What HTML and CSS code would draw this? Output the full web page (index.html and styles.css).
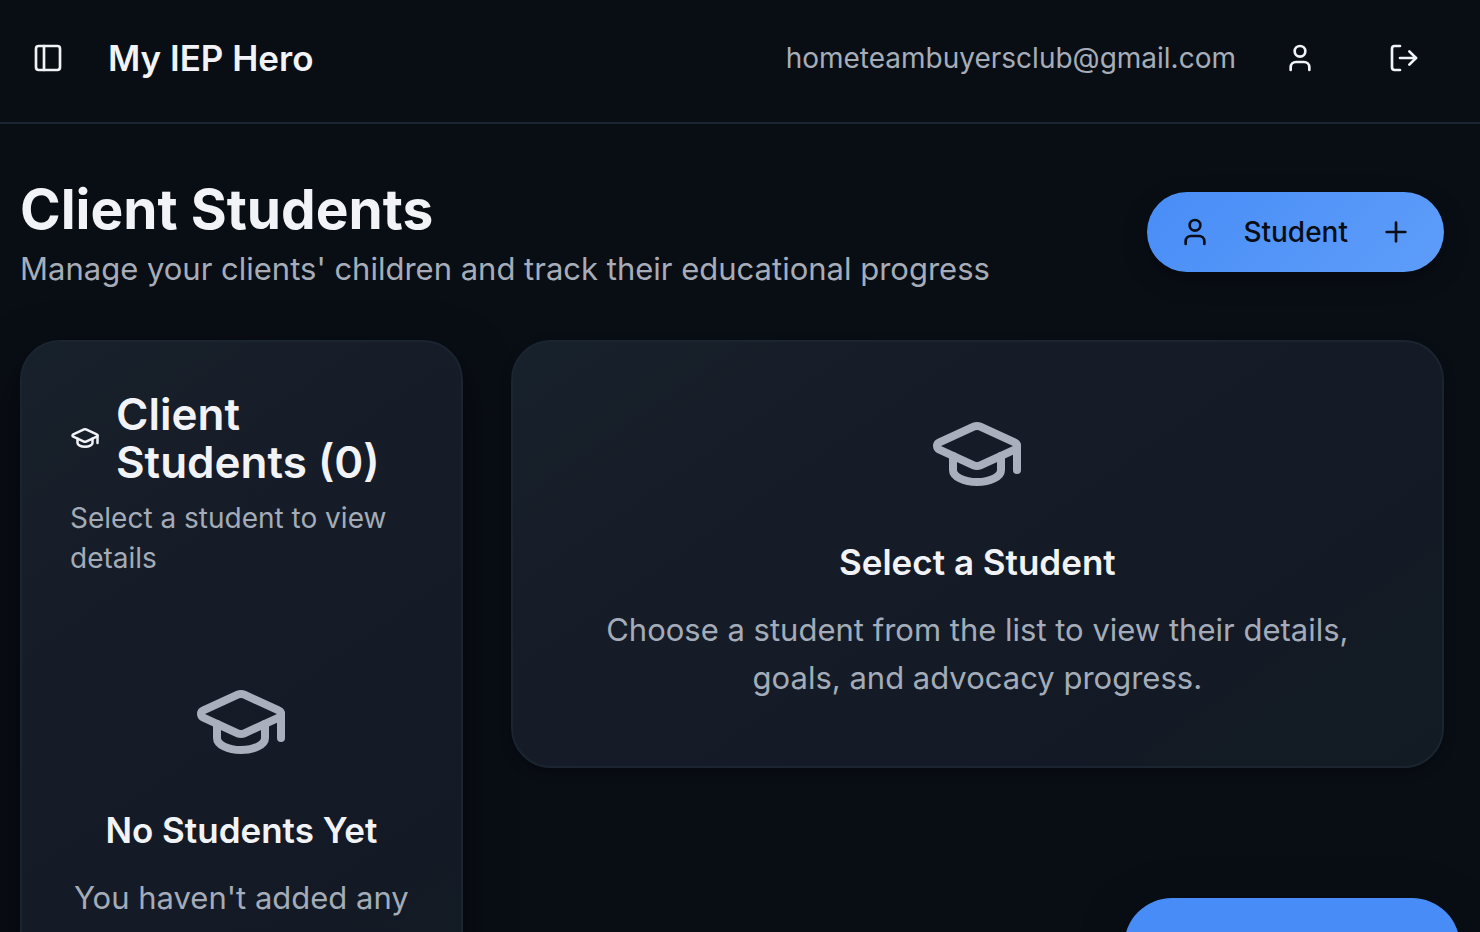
FILE: index.html
```html
<!DOCTYPE html>
<html lang="en">
<head>
<meta charset="utf-8">
<title>My IEP Hero</title>
<link rel="stylesheet" href="styles.css">
</head>
<body>
<svg class="sprite" aria-hidden="true">
  <symbol id="cap" viewBox="0 0 24 24"><path d="M21.42 10.922a1 1 0 0 0-.019-1.838L12.83 5.18a2 2 0 0 0-1.66 0L2.6 9.08a1 1 0 0 0 0 1.832l8.57 3.908a2 2 0 0 0 1.66 0z"/><path d="M22 10v6"/><path d="M6 12.5V16a6 3 0 0 0 12 0v-3.5"/></symbol>
  <symbol id="user" viewBox="0 0 24 24"><path d="M19 21v-2a4 4 0 0 0-4-4H9a4 4 0 0 0-4 4v2"/><circle cx="12" cy="7" r="4"/></symbol>
</svg>
<header class="topbar">
  <button class="icon-button sidebar-toggle" type="button" aria-label="Toggle sidebar">
    <svg class="icon" viewBox="0 0 24 24"><rect x="3" y="3" width="18" height="18" rx="2"/><path d="M9 3v18"/></svg>
  </button>
  <span class="brand">My IEP Hero</span>
  <div class="account">
    <span class="email">hometeambuyersclub@gmail.com</span>
    <button class="icon-button" type="button" aria-label="Profile"><svg class="icon"><use href="#user"/></svg></button>
    <button class="icon-button" type="button" aria-label="Sign out">
      <svg class="icon" viewBox="0 0 24 24"><path d="M9 21H5a2 2 0 0 1-2-2V5a2 2 0 0 1 2-2h4"/><path d="m16 17 5-5-5-5"/><path d="M21 12H9"/></svg>
    </button>
  </div>
</header>
<main class="content">
  <div class="page-head">
    <div>
      <h1 class="page-title">Client Students</h1>
      <p class="page-subtitle">Manage your clients' children and track their educational progress</p>
    </div>
    <button class="add-button" type="button">
      <svg class="icon"><use href="#user"/></svg>
      <span>Student</span>
      <svg class="icon" viewBox="0 0 24 24"><path d="M5 12h14"/><path d="M12 5v14"/></svg>
    </button>
  </div>
  <div class="columns">
    <section class="card card-raised">
      <div class="card-head">
        <h2 class="card-title"><svg class="icon"><use href="#cap"/></svg><span>Client Students (0)</span></h2>
        <p class="card-note">Select a student to view details</p>
      </div>
      <div class="empty empty-list">
        <svg class="icon icon-large"><use href="#cap"/></svg>
        <h3 class="empty-title">No Students Yet</h3>
        <p class="empty-text">You haven't added any</p>
      </div>
    </section>
    <section class="card">
      <div class="empty">
        <svg class="icon icon-large"><use href="#cap"/></svg>
        <h3 class="empty-title">Select a Student</h3>
        <p class="empty-text">Choose a student from the list to view their details, goals, and advocacy progress.</p>
      </div>
    </section>
  </div>
</main>
<button class="floating-button" type="button" aria-label="Open assistant"></button>
</body>
</html>
```
FILE: styles.css
```css
* { box-sizing: border-box; }
body {
  margin: 0;
  height: 100vh;
  overflow: hidden;
  background: #090e15;
  color: #f2f3f7;
  font-family: Inter, "Liberation Sans", sans-serif;
}
h1, h2, h3, p { margin: 0; }
button { border: 0; padding: 0; background: none; color: inherit; font: inherit; cursor: pointer; }
.sprite { display: none; }
.icon {
  display: block;
  flex: none;
  width: 32px;
  height: 32px;
  fill: none;
  stroke: currentColor;
  stroke-width: 2;
  stroke-linecap: round;
  stroke-linejoin: round;
}
.topbar {
  display: flex;
  align-items: center;
  padding: 18px 36px 24px 20px;
  border-bottom: 2px solid #1a2531;
}
.icon-button { display: grid; place-items: center; width: 80px; height: 80px; }
.sidebar-toggle { width: 56px; }
.brand { margin-left: 32px; font-size: 35px; font-weight: 600; }
.account { display: flex; align-items: center; gap: 24px; margin-left: auto; }
.email { color: #a6adb9; font-size: 28px; }
.content { padding: 48px 36px 48px 20px; }
.page-head { display: flex; align-items: center; justify-content: space-between; margin-bottom: 48px; }
.page-title { font-size: 55px; font-weight: 700; line-height: 74px; }
.page-subtitle { color: #a6adb9; font-size: 31px; line-height: 46px; }
.add-button {
  display: flex;
  align-items: center;
  gap: 32px;
  height: 80px;
  padding: 0 32px;
  border-radius: 40px;
  background: linear-gradient(135deg, #488df7, #5e9df9);
  box-shadow: 0 8px 24px rgba(0, 0, 0, 0.3);
  color: #090d15;
  font-size: 28px;
  font-weight: 500;
}
.columns { display: grid; grid-template-columns: repeat(3, minmax(0, 1fr)); gap: 48px; align-items: start; }
.card {
  grid-column: span 2;
  border: 2px solid #1a2531;
  border-radius: 40px;
  background: linear-gradient(145deg, #17212b 0%, #171d28 25%, #131a25 75%, #121b23 100%);
  box-shadow: 0 4px 12px rgba(0, 0, 0, 0.3);
}
.card-raised { grid-column: span 1; box-shadow: 0 16px 48px rgba(0, 0, 0, 0.5); }
.card-head { padding: 48px; }
.card-title { display: flex; align-items: center; gap: 16px; font-size: 44px; font-weight: 600; line-height: 48px; }
.card-title .icon { width: 30px; }
.card-note { margin-top: 12px; color: #a3acb8; font-size: 28px; line-height: 40px; }
.empty { display: flex; flex-direction: column; align-items: center; padding: 64px; text-align: center; }
.empty-list { padding: 48px 48px 160px; }
.icon-large { width: 96px; height: 96px; color: #a9afbc; }
.empty-title { margin-top: 32px; font-size: 35px; font-weight: 600; line-height: 56px; }
.empty-text { margin-top: 16px; color: #a3acb8; font-size: 31px; line-height: 48px; }
.floating-button {
  position: fixed;
  right: 20px;
  bottom: -62px;
  width: 336px;
  height: 96px;
  border-radius: 48px;
  background: #488df7;
  box-shadow: 0 8px 48px rgba(0, 0, 0, 0.3);
}
```
